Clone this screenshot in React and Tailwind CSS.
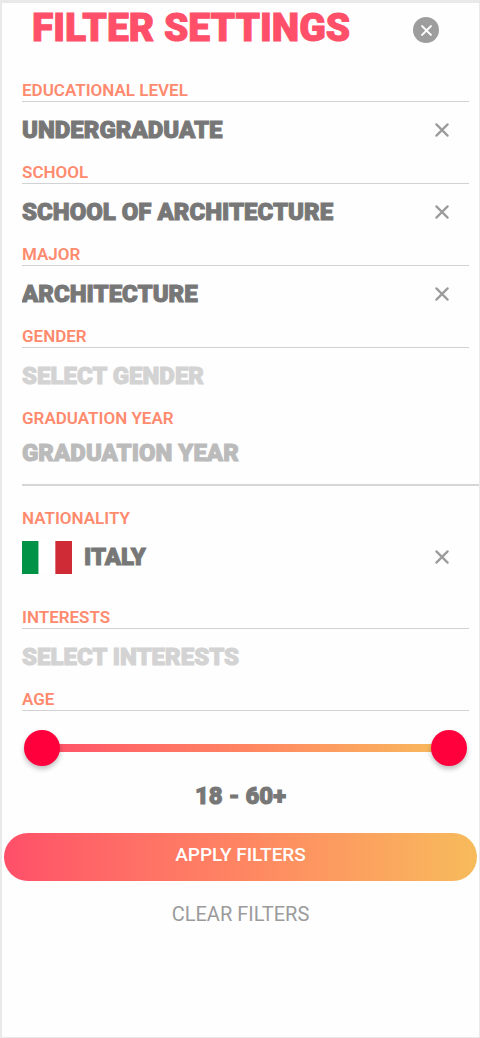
import React, { useState } from 'react';

const LABEL = 'block h-[21px] text-[17px] leading-5 font-semibold text-[#ff8a6e]';
const HEAVY = 'font-black [-webkit-text-stroke:1px]';
const VALUE = `min-w-0 flex-1 appearance-none bg-transparent text-[24px] outline-none ${HEAVY}`;
const THUMB = '[grid-area:1/1] w-full h-9 appearance-none bg-transparent pointer-events-none [&::-webkit-slider-thumb]:pointer-events-auto [&::-webkit-slider-thumb]:appearance-none [&::-webkit-slider-thumb]:size-9 [&::-webkit-slider-thumb]:rounded-full [&::-webkit-slider-thumb]:bg-[#ff003d] [&::-webkit-slider-thumb]:shadow-[0_3px_5px_rgba(0,0,0,0.25)]';

function Cross({ className, width = 2.2 }) {
  return (
    <svg viewBox="0 0 14 14" className={className} fill="none" stroke="currentColor" strokeWidth={width} strokeLinecap="round" aria-hidden="true">
      <path d="M1.4 1.4 12.6 12.6M12.6 1.4 1.4 12.6" />
    </svg>
  );
}

function Flag() {
  return (
    <svg viewBox="0 0 3 2" className="w-[50px] h-[33px] mr-3" preserveAspectRatio="none" aria-hidden="true">
      <path fill="#009246" d="M0 0h1v2H0z" />
      <path fill="#fff" d="M1 0h1v2H1z" />
      <path fill="#ce2b37" d="M2 0h1v2H2z" />
    </svg>
  );
}

function SelectField({ id, label, placeholder, options, initial = '', line = true, icon }) {
  const [value, setValue] = useState(initial);
  return (
    <div className="mr-[10px]">
      <label htmlFor={id} className={LABEL}>{label}</label>
      <div className={`flex items-center ${line ? 'border-t border-[#d2d2d4]' : ''}`}>
        {value && icon}
        <select id={id} value={value} onChange={e => setValue(e.target.value)} className={`${VALUE} h-14 ${value ? 'text-[#777777]' : 'text-[#d3d3d3]'}`}>
          <option value="">{placeholder}</option>
          {options.map(o => <option key={o} value={o}>{o}</option>)}
        </select>
        {value && (
          <button type="button" onClick={() => setValue('')} aria-label={`Clear ${label}`} className="p-2 mr-3 text-[#9b9b9b]">
            <Cross className="size-[14px]" />
          </button>
        )}
      </div>
    </div>
  );
}

export default function App() {
  const [min, setMin] = useState(18);
  const [max, setMax] = useState(60);
  return (
    <main className="min-h-screen flex flex-col bg-[#fefefe] border-l-2 border-t-[3px] border-r border-b border-[#e9e9e9] font-[Roboto,sans-serif]">
      <header className="h-[54px] pl-[30px] pr-10 flex items-center justify-between">
        <h1 className={`pb-[5px] text-[39px] leading-10 text-[#ff4f69] ${HEAVY}`}>FILTER SETTINGS</h1>
        <button type="button" aria-label="Close" className="size-[26px] rounded-full bg-[#9d9d9d] text-white flex items-center justify-center">
          <Cross className="size-[11px]" width={2.6} />
        </button>
      </header>
      <form onSubmit={e => e.preventDefault()} className="pt-[23px]">
        <div className="pl-5">
          <div className="space-y-1">
            <SelectField id="level" label="EDUCATIONAL LEVEL" placeholder="SELECT LEVEL" options={['UNDERGRADUATE', 'GRADUATE']} initial="UNDERGRADUATE" />
            <SelectField id="school" label="SCHOOL" placeholder="SELECT SCHOOL" options={['SCHOOL OF ARCHITECTURE']} initial="SCHOOL OF ARCHITECTURE" />
            <SelectField id="major" label="MAJOR" placeholder="SELECT MAJOR" options={['ARCHITECTURE']} initial="ARCHITECTURE" />
            <SelectField id="gender" label="GENDER" placeholder="SELECT GENDER" options={['FEMALE', 'MALE']} />
            <div>
              <label htmlFor="year" className={LABEL}>GRADUATION YEAR</label>
              <div className="flex pb-[7px] border-b-2 border-[#d6d6d6]">
                <input id="year" type="text" placeholder="GRADUATION YEAR" className={`${VALUE} h-12 text-[#777777] placeholder:text-[#bbbbbb]`} />
              </div>
            </div>
          </div>
          <div className="mt-[22px]">
            <SelectField id="nationality" label="NATIONALITY" placeholder="SELECT NATIONALITY" options={['ITALY']} initial="ITALY" line={false} icon={<Flag />} />
          </div>
          <div className="mt-[22px] space-y-1">
            <SelectField id="interests" label="INTERESTS" placeholder="SELECT INTERESTS" options={['DESIGN', 'MUSIC']} />
            <fieldset className="mr-[10px]">
              <legend className={LABEL}>AGE</legend>
              <div className="border-t border-[#d2d2d4] pt-[19px]">
                <div className="grid items-center mx-[2px]">
                  <div className="[grid-area:1/1] h-2 mx-4 bg-linear-to-r from-[#ff4f69] via-[#fe8562] to-[#f7bb5b]" />
                  <input type="range" aria-label="Minimum age" min="18" max="60" value={min} onChange={e => setMin(Math.min(+e.target.value, max))} className={THUMB} />
                  <input type="range" aria-label="Maximum age" min="18" max="60" value={max} onChange={e => setMax(Math.max(+e.target.value, min))} className={THUMB} />
                </div>
              </div>
            </fieldset>
          </div>
        </div>
        <p className={`pt-4 text-center text-[24px] leading-7 text-[#777777] ${HEAVY}`}>{min} - {max}{max === 60 && '+'}</p>
        <div className="px-[2px] pt-[23px]">
          <button type="submit" className="w-full h-12 pb-1 rounded-full bg-linear-to-r from-[#ff4f69] via-[#fe8562] to-[#f7bb5b] text-[19px] font-medium text-white">APPLY FILTERS</button>
          <button type="reset" className="w-full h-12 mt-[9px] text-[20px] text-[#9b9b9b]">CLEAR FILTERS</button>
        </div>
      </form>
    </main>
  );
}
